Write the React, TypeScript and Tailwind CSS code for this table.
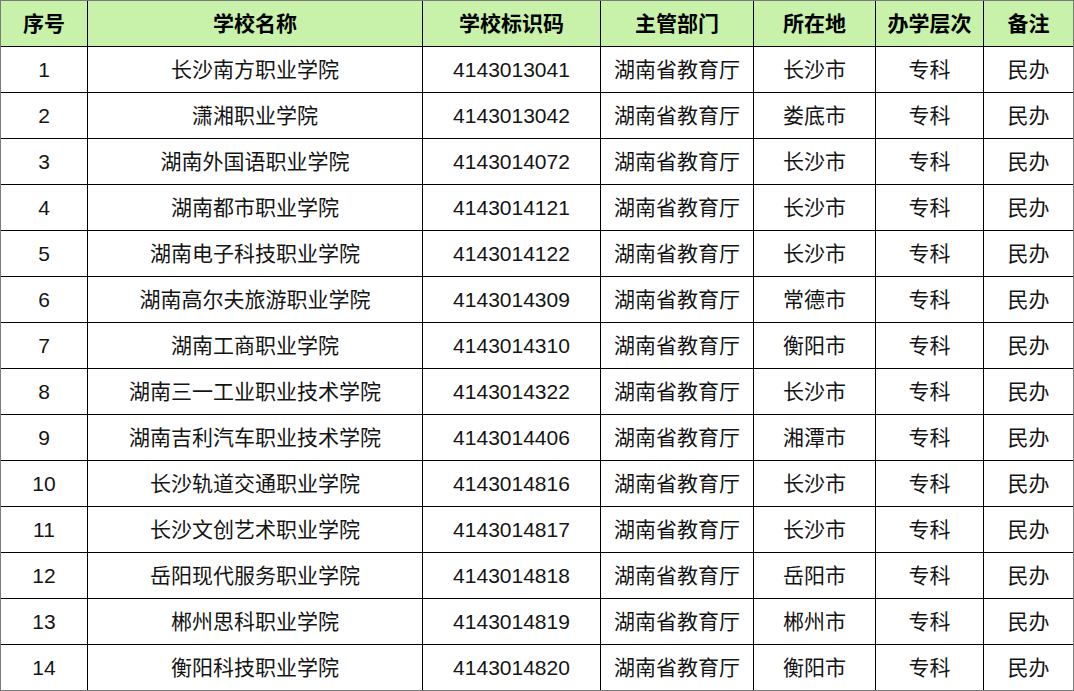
// Hunan private vocational colleges list, rendered as a bordered spreadsheet-style table.

const HEADERS = ["序号", "学校名称", "学校标识码", "主管部门", "所在地", "办学层次", "备注"];

const ROWS: [string, string, string, string][] = [
  ["1", "长沙南方职业学院", "4143013041", "长沙市"],
  ["2", "潇湘职业学院", "4143013042", "娄底市"],
  ["3", "湖南外国语职业学院", "4143014072", "长沙市"],
  ["4", "湖南都市职业学院", "4143014121", "长沙市"],
  ["5", "湖南电子科技职业学院", "4143014122", "长沙市"],
  ["6", "湖南高尔夫旅游职业学院", "4143014309", "常德市"],
  ["7", "湖南工商职业学院", "4143014310", "衡阳市"],
  ["8", "湖南三一工业职业技术学院", "4143014322", "长沙市"],
  ["9", "湖南吉利汽车职业技术学院", "4143014406", "湘潭市"],
  ["10", "长沙轨道交通职业学院", "4143014816", "长沙市"],
  ["11", "长沙文创艺术职业学院", "4143014817", "长沙市"],
  ["12", "岳阳现代服务职业学院", "4143014818", "岳阳市"],
  ["13", "郴州思科职业学院", "4143014819", "郴州市"],
  ["14", "衡阳科技职业学院", "4143014820", "衡阳市"],
];

const GRID = "grid grid-cols-[87px_335px_178px_153px_122px_108px_89px]";

export default function App() {
  return (
    <div className="w-[1074px] bg-white font-['Liberation_Sans','Noto_Sans_CJK_SC',sans-serif]">
      <div className="border border-[#7a7a7a]">
        {/* Header */}
        <div className={`${GRID} h-[46px] bg-[#c8f2aa] border-b border-black`}>
          {HEADERS.map((h, i) => (
            <div
              key={h}
              className={`flex items-center justify-center text-[21px] font-bold text-black ${i < 6 ? "border-r border-black" : ""}`}
            >
              {h}
            </div>
          ))}
        </div>

        {/* Body */}
        {ROWS.map((r, ri) => {
          const last = ri === ROWS.length - 1;
          const cells = [r[0], r[1], r[2], "湖南省教育厅", r[3], "专科", "民办"];
          return (
            <div key={r[0]} className={`${GRID} ${last ? "h-[45px]" : "h-[46px] border-b border-black"}`}>
              {cells.map((c, i) => (
                <div
                  key={i}
                  className={`flex items-center justify-center text-[21px] text-[#141414] ${i < 6 ? "border-r border-black" : ""}`}
                >
                  {c}
                </div>
              ))}
            </div>
          );
        })}
      </div>
    </div>
  );
}
